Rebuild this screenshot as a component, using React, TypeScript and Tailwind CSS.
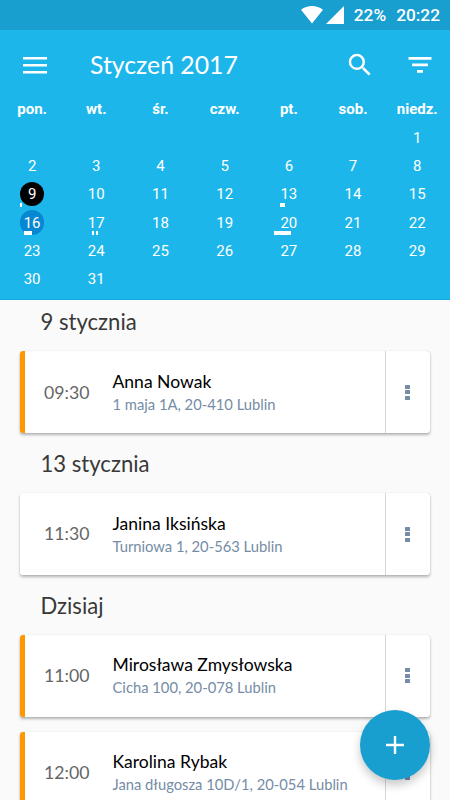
import React from "react";

type Mark = { left: number; width: number };
type Visit = { time: string; name: string; address: string; accent: boolean };
type Section = { title: string; visits: Visit[] };

const WEEKDAYS = ["pon.", "wt.", "śr.", "czw.", "pt.", "sob.", "niedz."];
const DAYS: (number | null)[] = [
  ...Array<null>(6).fill(null),
  ...Array.from({ length: 31 }, (_, i) => i + 1),
];

/* Activity marks under a day, measured from the left edge of its cell. */
const MARKS: Record<number, Mark[]> = {
  9: [{ left: 20, width: 2 }],
  13: [{ left: 23, width: 5 }],
  16: [{ left: 24, width: 8 }],
  17: [
    { left: 28, width: 2 },
    { left: 32, width: 2 },
  ],
  20: [{ left: 17, width: 17 }],
};

const SECTIONS: Section[] = [
  {
    title: "9 stycznia",
    visits: [{ time: "09:30", name: "Anna Nowak", address: "1 maja 1A, 20-410 Lublin", accent: true }],
  },
  {
    title: "13 stycznia",
    visits: [{ time: "11:30", name: "Janina Iksińska", address: "Turniowa 1, 20-563 Lublin", accent: false }],
  },
  {
    title: "Dzisiaj",
    visits: [
      { time: "11:00", name: "Mirosława Zmysłowska", address: "Cicha 100, 20-078 Lublin", accent: true },
      { time: "12:00", name: "Karolina Rybak", address: "Jana długosza 10D/1, 20-054 Lublin", accent: true },
    ],
  },
];

function StatusBar() {
  return (
    <div className="flex h-[30px] items-center justify-end bg-[#189ecf] pr-[10px] font-['Roboto',sans-serif] text-[17.300px] font-medium text-white">
      <svg width="22" height="18" viewBox="0 0 22 18" className="mr-[3px] fill-current">
        <path d="M0 3.8C6.5-1.2 15.500-1.200 22 3.800L11 17.500Z" />
      </svg>
      <svg width="18" height="18" viewBox="0 0 18 18" className="mr-[10px] fill-current">
        <path d="M18 0V18H0Z" />
      </svg>
      <span className="mr-[10px] pt-px">22%</span>
      <span className="pt-px">20:22</span>
    </div>
  );
}

function Toolbar() {
  return (
    <div className="flex h-[70px] items-center pr-[18px] pl-[23px] text-white">
      <svg width="24" height="17" viewBox="0 0 24 17" className="fill-current">
        <path d="M0 0h24v2.600H0zM0 7h24v2.600H0zM0 14h24v2.600H0z" />
      </svg>
      <h1 className="ml-[43px] flex-1 pb-px font-['Lato',sans-serif] text-[24.800px] leading-[30px]">Styczeń 2017</h1>
      <svg width="30" height="30" viewBox="0 0 24 24" className="mr-[33px] fill-current">
        <path d="M15.500 14h-.79l-.28-.27A6.471 6.471 0 0 0 16 9.500 6.500 6.500 0 1 0 9.500 16c1.610 0 3.090-.59 4.230-1.570l.27.28v.79l5 4.990L20.490 19l-4.990-5zm-6 0C7.010 14 5 11.990 5 9.500S7.010 5 9.500 5 14 7.010 14 9.500 11.990 14 9.500 14z" />
      </svg>
      <svg width="24" height="16" viewBox="0 0 24 16" className="fill-current">
        <path d="M0.500 0h23v2.700h-23zM4 6.500h16v2.700H4zM9 13h6v2.700H9z" />
      </svg>
    </div>
  );
}

function Day({ day }: { day: number | null }) {
  const circle = day === 9 ? "bg-black" : day === 16 ? "bg-[#0787d1]" : "";
  return (
    <div className="relative flex items-center justify-center">
      {day !== null && (
        <span className={`flex size-[24.500px] items-center justify-center rounded-full pt-px ${circle}`}>{day}</span>
      )}
      {day !== null &&
        (MARKS[day] ?? []).map((m) => (
          <i key={m.left} className="absolute bottom-[1.500px] h-[4px] bg-white" style={{ left: m.left, width: m.width }} />
        ))}
    </div>
  );
}

function Calendar() {
  return (
    <div className="font-['Roboto',sans-serif] text-[15px] text-white">
      <div className="grid h-[23.500px] grid-cols-[repeat(7,64.200px)] text-center leading-[18px] font-bold">
        {WEEKDAYS.map((d) => (
          <span key={d}>{d}</span>
        ))}
      </div>
      <div className="grid auto-rows-[28.300px] grid-cols-[repeat(7,64.200px)]">
        {DAYS.map((d, i) => (
          <Day key={i} day={d} />
        ))}
      </div>
    </div>
  );
}

function VisitCard({ visit }: { visit: Visit }) {
  return (
    <article className="flex h-[82px] overflow-hidden rounded-[3px] bg-white shadow-[0_2px_3px_rgba(0,0,0,0.28),0_0_1px_rgba(0,0,0,0.22)]">
      <div className={`w-[5px] ${visit.accent ? "bg-[#ff9800]" : "bg-white"}`} />
      <time className="w-[87.500px] self-center pt-px pl-[19px] text-[17.700px] text-[#666]">{visit.time}</time>
      <div className="flex flex-1 flex-col pt-[18.600px]">
        <h3 className="text-[17.550px] leading-[23px] text-black">{visit.name}</h3>
        <p className="text-[14.750px] leading-[23.400px] text-[#758ca6]">{visit.address}</p>
      </div>
      <button className="flex w-[45px] flex-col items-center justify-center gap-[1.500px] border-l border-[#d5d5d5] pr-px" aria-label="Menu">
        <i className="h-[4px] w-[4.500px] rounded-[0.500px] bg-[#758ca6]" />
        <i className="h-[4px] w-[4.500px] rounded-[0.500px] bg-[#758ca6]" />
        <i className="h-[4px] w-[4.500px] rounded-[0.500px] bg-[#758ca6]" />
      </button>
    </article>
  );
}

export default function App() {
  return (
    <div className="relative flex h-[800px] w-[450px] flex-col overflow-hidden bg-[#fafafa]">
      <StatusBar />
      <header className="h-[270px] shrink-0 border-b border-[#16a9e0] bg-[#1cb6eb]">
        <Toolbar />
        <Calendar />
      </header>
      <main className="min-h-0 flex-1 overflow-hidden px-5 font-['Lato',sans-serif]">
        {SECTIONS.map((s) => (
          <section key={s.title} className="mb-[8.500px]">
            <h2 className="h-[51.300px] pl-[20.500px] text-[22.100px] leading-[44px] text-[#383838]">{s.title}</h2>
            <div className="flex flex-col gap-[15px]">
              {s.visits.map((v) => (
                <VisitCard key={v.name} visit={v} />
              ))}
            </div>
          </section>
        ))}
      </main>
      <button
        aria-label="Dodaj"
        className="absolute top-[710px] left-[360px] flex size-[70px] items-center justify-center rounded-full bg-[#189ecf] text-white shadow-[0_5px_10px_rgba(0,0,0,0.22)]"
      >
        <svg width="18" height="18" viewBox="0 0 18 18" className="fill-current">
          <path d="M7.800 0h2.400v7.800H18v2.400h-7.800V18H7.800v-7.800H0V7.800h7.800z" />
        </svg>
      </button>
    </div>
  );
}
